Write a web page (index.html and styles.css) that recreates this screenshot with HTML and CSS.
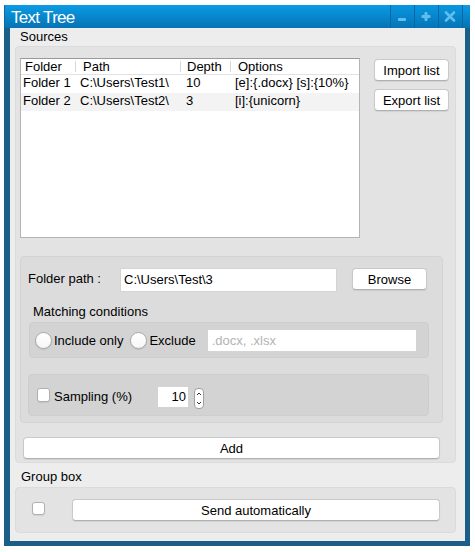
FILE: index.html
```html
<!DOCTYPE html>
<html>
<head>
<meta charset="utf-8">
<title>Text Tree</title>
<link rel="stylesheet" href="styles.css">
</head>
<body>
<div class="window">
  <div class="titlebar">
    <div class="title">Text Tree</div>
    <div class="tbtns">
      <div class="tbtn"><svg width="24" height="23" viewBox="0 0 24 23"><rect x="8" y="13" width="8" height="3" rx="1" fill="#62bdec"/></svg></div>
      <div class="tbtn"><svg width="24" height="23" viewBox="0 0 24 23"><rect x="7.5" y="10" width="9" height="3" rx="1" fill="#62bdec"/><rect x="10.5" y="7" width="3" height="9" rx="1" fill="#62bdec"/></svg></div>
      <div class="tbtn"><svg width="24" height="23" viewBox="0 0 24 23"><path d="M8 7.5 L16 15.5 M16 7.5 L8 15.5" stroke="#62bdec" stroke-width="2.6" stroke-linecap="round"/></svg></div>
    </div>
  </div>
  <div class="body">
    <div class="glabel first">Sources</div>
    <div class="group sources">
      <div class="top-row">
        <div class="table">
          <div class="thead">
            <div class="th c1">Folder</div>
            <div class="th c2 sep">Path</div>
            <div class="th c3 sep">Depth</div>
            <div class="th c4 sep">Options</div>
          </div>
          <div class="tr">
            <div class="td d1">Folder 1</div>
            <div class="td d2">C:\Users\Test1\</div>
            <div class="td d3">10</div>
            <div class="td d4">[e]:{.docx} [s]:{10%}</div>
          </div>
          <div class="tr alt">
            <div class="td d1">Folder 2</div>
            <div class="td d2">C:\Users\Test2\</div>
            <div class="td d3">3</div>
            <div class="td d4">[i]:{unicorn}</div>
          </div>
        </div>
        <div class="side-btns">
          <div class="btn side">Import list</div>
          <div class="btn side">Export list</div>
        </div>
      </div>
      <div class="folder-box">
        <div class="path-row">
          <div class="path-label">Folder path :</div>
          <div class="field path-field">C:\Users\Test\3</div>
          <div class="btn browse">Browse</div>
        </div>
        <div class="match-label">Matching conditions</div>
        <div class="radio-box">
          <span class="radio"></span><span class="rlabel r1">Include only</span>
          <span class="radio"></span><span class="rlabel r2">Exclude</span>
          <div class="field ext-field">.docx, .xlsx</div>
        </div>
        <div class="sampling-box">
          <span class="check"></span>
          <span class="slabel">Sampling (%)</span>
          <div class="spin-field">10</div>
          <div class="spinner"><svg width="10" height="21" viewBox="0 0 10 21"><path d="M3 7 L5 5 L7 7" fill="none" stroke="#333" stroke-width="1"/><path d="M3 14 L5 16 L7 14" fill="none" stroke="#333" stroke-width="1"/></svg></div>
        </div>
      </div>
      <div class="btn add">Add</div>
    </div>
    <div class="glabel second">Group box</div>
    <div class="group gbox">
      <span class="check gcheck"></span>
      <div class="btn send">Send automatically</div>
    </div>
  </div>
</div>
</body>
</html>
```

FILE: styles.css
```css
* { box-sizing: border-box; }
body {
  margin: 0;
  background: #ffffff;
  font-family: "Liberation Sans", Arial, sans-serif;
  font-size: 13px;
  color: #000;
}
.window {
  margin: 5px 0 0 4px;
  width: 466px;
  height: 541px;
  background: #1b5f88;
  display: flex;
  flex-direction: column;
}
.titlebar {
  height: 23px;
  flex: none;
  background: linear-gradient(#0a9ce5, #0672b4);
  border-left: 1px solid #15649a;
  display: flex;
  align-items: center;
  padding-left: 6px;
  padding-right: 7px;
}
.title {
  color: #fff;
  font-size: 17px;
  letter-spacing: -0.7px;
  padding-top: 2px;
  flex: 1;
}
.tbtns { display: flex; height: 23px; border-right: 1px solid #0a66a3; }
.tbtn {
  width: 24px;
  height: 23px;
  border-left: 1px solid #0a66a3;
  background: linear-gradient(#0898e0, #0674b6);
}
.tbtn svg { display: block; margin-left: -1px; }
.body {
  flex: 1;
  margin: 0 5px 5px 6px;
  background: #ededed;
}
.glabel { line-height: 16px; }
.glabel.first { padding: 1px 0 0 10px; height: 18px; }
.glabel.second { padding-left: 11px; margin-top: 6px; height: 17px; }
.group {
  margin-left: 5px;
  width: 441px;
  background: #e3e3e3;
  border: 1px solid #dbdbdb;
  border-radius: 4px;
}
.sources { height: 417px; }
.top-row {
  display: flex;
  margin-top: 11px;
  padding-left: 4px;
}
.table {
  width: 340px;
  height: 180px;
  background: #fff;
  border: 1px solid #b4b4b4;
  border-top-color: #999;
}
.thead {
  display: grid;
  grid-template-columns: 54px 105px 50px 1fr;
  height: 16px;
  border-bottom: 1px solid #e2e2e2;
  line-height: 15px;
}
.th { white-space: nowrap; }
.th.c1 { padding-left: 4px; }
.th.c2 { padding-left: 8px; }
.th.c3 { padding-left: 7px; }
.th.c4 { padding-left: 8px; }
.sep {
  background: linear-gradient(#d6d6d6, #d6d6d6) left 2px / 1px 11px no-repeat;
}
.tr {
  display: grid;
  grid-template-columns: 57px 106px 49px 1fr;
  height: 18px;
  line-height: 16px;
}
.tr.alt { background: #f3f3f3; }
.td { padding-left: 2px; white-space: nowrap; }
.side-btns {
  display: flex;
  flex-direction: column;
  gap: 8px;
  margin-left: 14px;
  margin-top: 1px;
}
.btn {
  background: #fff;
  border: 1px solid #c9c9c9;
  border-bottom-color: #b0b0b0;
  border-radius: 4px;
  box-shadow: 0 1px 1px rgba(0,0,0,0.08);
  display: flex;
  align-items: center;
  justify-content: center;
  height: 22px;
}
.btn.side { width: 75px; }
.folder-box {
  margin: 18px 0 0 4px;
  width: 423px;
  height: 167px;
  background: #dcdcdc;
  border: 1px solid #d3d3d3;
  border-radius: 4px;
}
.path-row {
  display: flex;
  align-items: flex-start;
  margin-top: 11px;
  padding-left: 7px;
}
.path-label {
  width: 92px;
  line-height: 16px;
  margin-top: 3px;
}
.field {
  background: #fff;
  border: 1px solid #d4d4d4;
  line-height: 21px;
  padding-left: 3px;
  white-space: nowrap;
}
.path-field { width: 217px; height: 24px; }
.browse { width: 75px; margin-left: 15px; }
.match-label {
  margin-top: 12px;
  padding-left: 12px;
  line-height: 16px;
}
.radio-box {
  margin: 2px 0 0 8px;
  width: 400px;
  height: 36px;
  background: #d3d3d3;
  border: 1px solid #cecece;
  border-radius: 4px;
  display: flex;
  align-items: center;
  padding-left: 5px;
}
.radio {
  width: 17px;
  height: 17px;
  border-radius: 50%;
  background: linear-gradient(#fff, #f6f6f6);
  border: 1px solid #a9a9a9;
  box-shadow: 0 1px 1px rgba(0,0,0,0.1);
  flex: none;
}
.rlabel { margin-left: 2px; }
.r1 { margin-right: 7px; }
.r2 { margin-right: 11px; }
.ext-field {
  width: 210px;
  height: 23px;
  color: #b3b3b3;
  padding-left: 4px;
}
.sampling-box {
  margin: 16px 0 0 7px;
  width: 401px;
  height: 42px;
  background: #d3d3d3;
  border: 1px solid #cecece;
  border-radius: 4px;
  display: flex;
  align-items: center;
  padding-left: 8px;
}
.check {
  width: 13px;
  height: 14px;
  background: #fff;
  border: 1px solid #b0b0b0;
  border-radius: 3px;
  box-shadow: 0 1px 1px rgba(0,0,0,0.08);
  flex: none;
}
.slabel { margin-left: 4px; width: 104px; margin-top: 2px; }
.spin-field {
  width: 30px;
  height: 20px;
  background: #fff;
  text-align: right;
  padding-right: 2px;
  line-height: 20px;
  margin-top: 4px;
}
.spinner {
  width: 10px;
  height: 21px;
  margin-left: 6px;
  margin-top: 7px;
  background: #fff;
  border: 1px solid #a0a0a0;
  border-radius: 4px;
  overflow: hidden;
}
.spinner svg { display: block; margin: -1px 0 0 -1px; }
.add {
  margin: 14px 0 0 7px;
  width: 417px;
}
.gbox {
  margin-top: 1px;
  height: 46px;
  display: flex;
  align-items: center;
  padding-left: 16px;
}
.gcheck { width: 13px; height: 13px; margin-top: -3px; }
.send {
  width: 368px;
  margin-left: 27px;
}
```
